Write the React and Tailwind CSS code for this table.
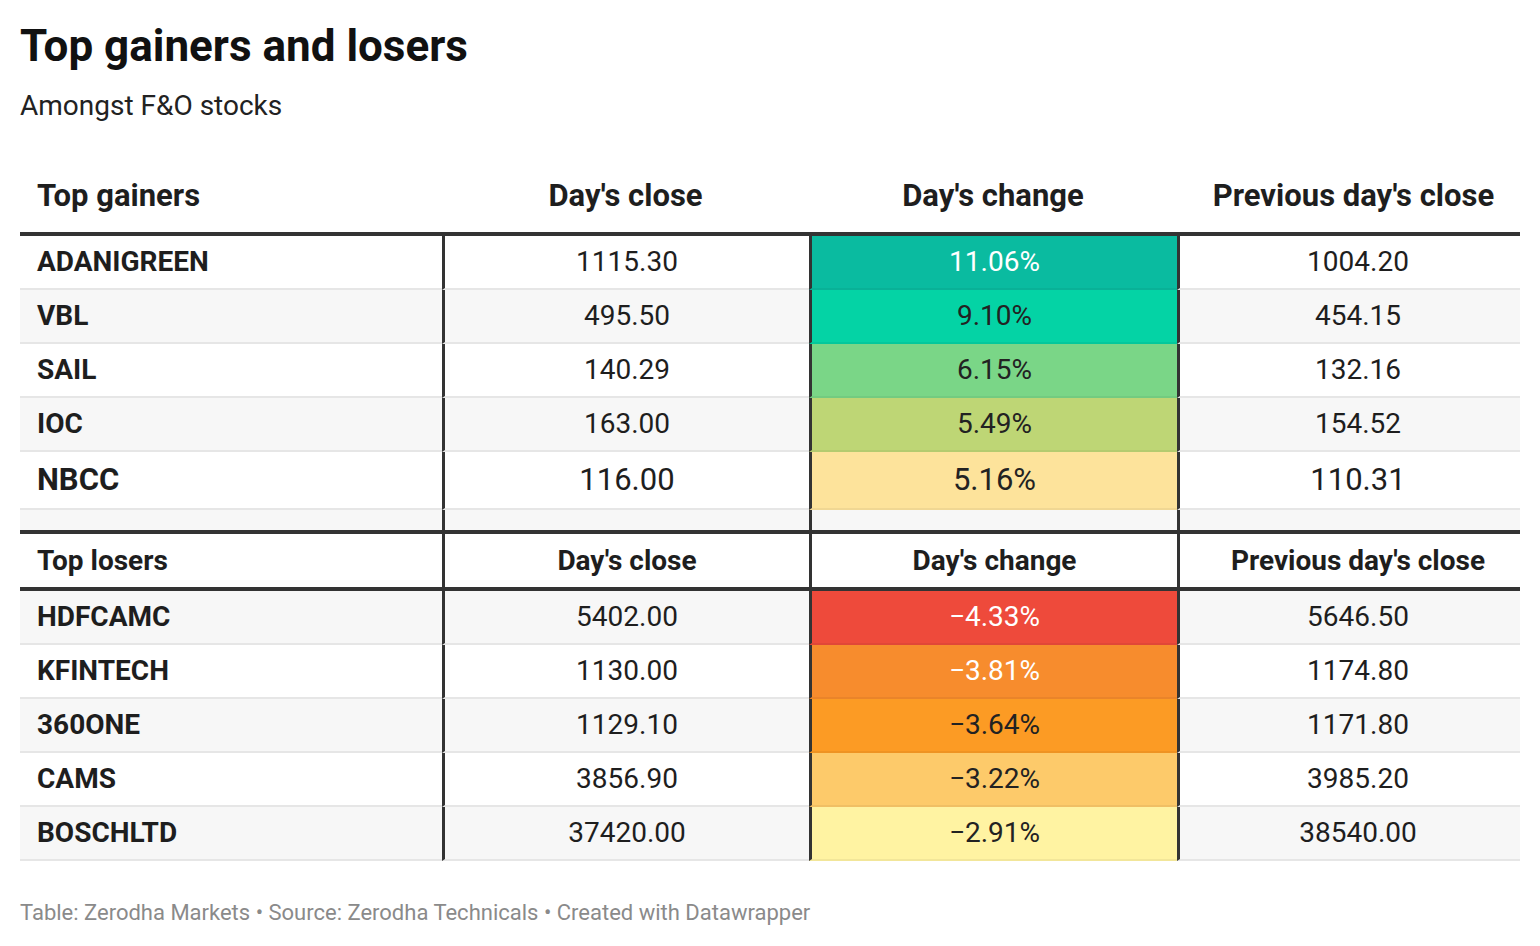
import React from 'react';

const gainers = [
  { name: 'ADANIGREEN', close: '1115.30', change: '11.06%', prev: '1004.20', cell: 'bg-[#0abba0] text-white' },
  { name: 'VBL', close: '495.50', change: '9.10%', prev: '454.15', cell: 'bg-[#04d3a5] text-[#222]' },
  { name: 'SAIL', close: '140.29', change: '6.15%', prev: '132.16', cell: 'bg-[#7ad687] text-[#222]' },
  { name: 'IOC', close: '163.00', change: '5.49%', prev: '154.52', cell: 'bg-[#bed675] text-[#222]' },
  { name: 'NBCC', close: '116.00', change: '5.16%', prev: '110.31', cell: 'bg-[#fde39b] text-[#222]', big: true },
];

const losers = [
  { name: 'HDFCAMC', close: '5402.00', change: '−4.33%', prev: '5646.50', cell: 'bg-[#ee4a3b] text-white' },
  { name: 'KFINTECH', close: '1130.00', change: '−3.81%', prev: '1174.80', cell: 'bg-[#f78c2d] text-white' },
  { name: '360ONE', close: '1129.10', change: '−3.64%', prev: '1171.80', cell: 'bg-[#fc9b24] text-[#222]' },
  { name: 'CAMS', close: '3856.90', change: '−3.22%', prev: '3985.20', cell: 'bg-[#fdca6a] text-[#222]' },
  { name: 'BOSCHLTD', close: '37420.00', change: '−2.91%', prev: '38540.00', cell: 'bg-[#fff3a2] text-[#222]' },
];

const DataRow = ({ row, gray }) => {
  const bg = gray ? 'bg-[#f7f7f7]' : 'bg-white';
  const h = row.big ? 'h-[58px] text-[31px]' : 'h-[54px] text-[28px]';
  return (
    <div className={`flex ${h} text-[#1e1e1e]`}>
      <div className={`w-[422px] ${bg} border-b-2 border-[#e6e6e6] pl-[17px] flex items-center font-bold`}>{row.name}</div>
      <div className={`w-[367px] ${bg} border-l-[3px] border-l-[#333] border-b-2 border-b-[#e6e6e6] flex items-center justify-center`}>{row.close}</div>
      <div className={`w-[368px] ${row.cell} border-l-[3px] border-l-[#333] border-b-2 border-b-black/5 flex items-center justify-center`}>{row.change}</div>
      <div className={`w-[343px] ${bg} border-l-[3px] border-l-[#333] border-b-2 border-b-[#e6e6e6] pl-[16px] flex items-center justify-center`}>{row.prev}</div>
    </div>
  );
};

export default function App() {
  return (
    <div className="min-h-screen bg-white px-5 pt-5 text-[#1a1a1a]" style={{ fontFamily: 'Roboto, "Liberation Sans", sans-serif' }}>
      <h1 className="text-[44px] leading-[52px] font-bold text-[#111]">Top gainers and losers</h1>
      <p className="mt-4 text-[28px] leading-[36px] text-[#222]">Amongst F&amp;O stocks</p>

      <div className="mt-[36px] w-[1500px]">
        {/* Gainers header */}
        <div className="flex h-[76px] items-center text-[31px] font-bold text-[#1e1e1e] border-b-4 border-[#333]">
          <div className="w-[422px] pl-[17px]">Top gainers</div>
          <div className="w-[367px] text-center">Day's close</div>
          <div className="w-[368px] text-center">Day's change</div>
          <div className="w-[343px] text-center pl-[10px]">Previous day's close</div>
        </div>

        {gainers.map((r, i) => (
          <DataRow key={r.name} row={r} gray={i % 2 === 1} />
        ))}

        {/* spacer */}
        <div className="flex h-[20px] bg-[#f7f7f7]">
          <div className="w-[422px]"></div>
          <div className="w-[367px] border-l-[3px] border-[#333]"></div>
          <div className="w-[368px] border-l-[3px] border-[#333]"></div>
          <div className="w-[343px] border-l-[3px] border-[#333]"></div>
        </div>

        {/* Losers header */}
        <div className="flex h-[61px] text-[28px] font-bold text-[#1e1e1e] border-y-4 border-[#333] bg-white">
          <div className="w-[422px] pl-[17px] flex items-center">Top losers</div>
          <div className="w-[367px] border-l-[3px] border-[#333] flex items-center justify-center">Day's close</div>
          <div className="w-[368px] border-l-[3px] border-[#333] flex items-center justify-center">Day's change</div>
          <div className="w-[343px] border-l-[3px] border-[#333] pl-[16px] flex items-center justify-center">Previous day's close</div>
        </div>

        {losers.map((r, i) => (
          <DataRow key={r.name} row={r} gray={i % 2 === 0} />
        ))}
      </div>

      <p className="mt-[39px] text-[22px] leading-[26px] text-[#8a8a8a]">
        Table: Zerodha Markets • Source: Zerodha Technicals • Created with Datawrapper
      </p>
    </div>
  );
}
